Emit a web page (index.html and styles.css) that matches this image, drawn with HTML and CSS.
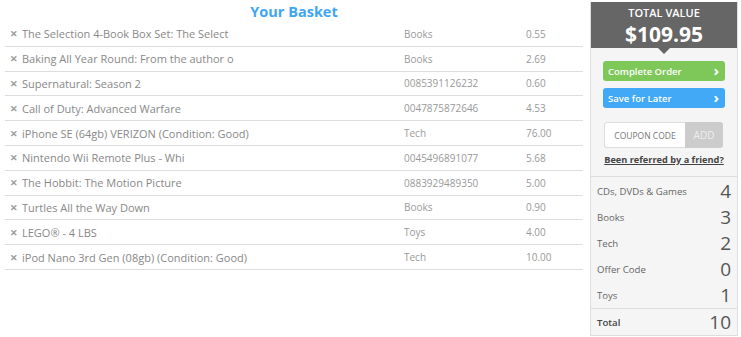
FILE: index.html
```html
<!DOCTYPE html>
<html lang="en">
<head>
  <meta charset="UTF-8">
  <title>Your Basket</title>
  <link rel="stylesheet" href="styles.css">
</head>
<body>
  <div class="page">
    <div class="basket">
      <h1>Your Basket</h1>
      <div class="items">
        <div class="item"><span class="rm">&#x2715;</span><span class="name">The Selection 4-Book Box Set: The Select</span><span class="cat">Books</span><span class="price">0.55</span></div>
        <div class="item"><span class="rm">&#x2715;</span><span class="name">Baking All Year Round: From the author o</span><span class="cat">Books</span><span class="price">2.69</span></div>
        <div class="item"><span class="rm">&#x2715;</span><span class="name">Supernatural: Season 2</span><span class="cat">0085391126232</span><span class="price">0.60</span></div>
        <div class="item"><span class="rm">&#x2715;</span><span class="name">Call of Duty: Advanced Warfare</span><span class="cat">0047875872646</span><span class="price">4.53</span></div>
        <div class="item"><span class="rm">&#x2715;</span><span class="name">iPhone SE (64gb) VERIZON (Condition: Good)</span><span class="cat">Tech</span><span class="price">76.00</span></div>
        <div class="item"><span class="rm">&#x2715;</span><span class="name">Nintendo Wii Remote Plus - Whi</span><span class="cat">0045496891077</span><span class="price">5.68</span></div>
        <div class="item"><span class="rm">&#x2715;</span><span class="name">The Hobbit: The Motion Picture</span><span class="cat">0883929489350</span><span class="price">5.00</span></div>
        <div class="item"><span class="rm">&#x2715;</span><span class="name">Turtles All the Way Down</span><span class="cat">Books</span><span class="price">0.90</span></div>
        <div class="item"><span class="rm">&#x2715;</span><span class="name">LEGO® - 4 LBS</span><span class="cat">Toys</span><span class="price">4.00</span></div>
        <div class="item"><span class="rm">&#x2715;</span><span class="name">iPod Nano 3rd Gen (08gb) (Condition: Good)</span><span class="cat">Tech</span><span class="price">10.00</span></div>
      </div>
    </div>

    <div class="summary">
      <div class="total-box">
        <div class="total-label">TOTAL VALUE</div>
        <div class="total-value">$109.95</div>
      </div>
      <div class="actions">
        <button class="btn btn-green">Complete Order <span class="chev">&#x203A;</span></button>
        <button class="btn btn-blue">Save for Later <span class="chev">&#x203A;</span></button>
        <div class="coupon">
          <input type="text" placeholder="COUPON CODE">
          <button class="add">ADD</button>
        </div>
        <a class="referral" href="#">Been referred by a friend?</a>
      </div>
      <div class="stats">
        <div class="stat"><span>CDs, DVDs &amp; Games</span><b>4</b></div>
        <div class="stat"><span>Books</span><b>3</b></div>
        <div class="stat"><span>Tech</span><b>2</b></div>
        <div class="stat"><span>Offer Code</span><b>0</b></div>
        <div class="stat"><span>Toys</span><b>1</b></div>
        <div class="stat stat-total"><span>Total</span><b>10</b></div>
      </div>
    </div>
  </div>
</body>
</html>
```

FILE: styles.css
```css
body { margin: 0; font-family: "Open Sans", "Liberation Sans", sans-serif; background: #fff; color: #888; }
.page { display: flex; align-items: flex-start; }

.basket { width: 578px; padding-left: 5px; }
h1 { margin: 0; padding-top: 2px; height: 20px; line-height: 20px; font-size: 14.5px; font-weight: 700; color: #40a6f2; text-align: center; }
.item { display: grid; grid-template-columns: 17px 382px 122px 1fr; align-items: center; height: 23.8px; border-bottom: 1px solid #ddd; }
.rm { font-size: 9px; color: #999; font-weight: 700; padding-left: 5px; }
.name { font-size: 11px; color: #888; }
.cat, .price { font-size: 10px; color: #999; }
.name, .cat, .price { white-space: nowrap; overflow: hidden; }

.summary { width: 146px; margin: 2px 0 0 7px; background: #f5f5f5; border: 1px solid #ddd; border-top: none; }
.total-box { position: relative; background: #666; color: #fff; text-align: center; height: 46px; }
.total-box::after { content: ""; position: absolute; left: 50%; bottom: -6px; margin-left: -6px; border-left: 6px solid transparent; border-right: 6px solid transparent; border-top: 6px solid #666; }
.total-label { font-size: 11px; font-weight: 600; padding-top: 3px; line-height: 16px; }
.total-value { font-size: 21px; font-weight: 700; line-height: 26px; }

.actions { padding: 13px 12px 0; display: flex; flex-direction: column; align-items: stretch; }
.btn { display: flex; justify-content: space-between; align-items: center; height: 20px; border: none; border-radius: 3px; color: #fff; font-family: inherit; font-size: 9.5px; font-weight: 600; padding: 0 6px 0 5px; }
.btn + .btn { margin-top: 7px; }
.btn-green { background: #7ec85a; }
.btn-blue { background: #41a9f5; }
.chev { font-size: 15px; font-weight: 700; line-height: 15px; margin-top: -2px; }

.coupon { display: flex; margin-top: 14px; height: 26px; padding: 0 2px 0 1px; }
.coupon input { width: 72px; border: 1px solid #ddd; border-right: none; border-radius: 3px 0 0 3px; background: #fff; padding: 0 4px; font-family: inherit; font-size: 8.5px; text-align: center; }
.coupon input::placeholder { color: #777; }
.add { flex: 1; border: none; border-radius: 0 3px 3px 0; background: #ccc; color: #eee; font-family: inherit; font-size: 10px; }

.referral { display: block; margin: 6px -6px 0; padding-bottom: 10px; text-align: center; white-space: nowrap; color: #444; font-size: 9.2px; font-weight: 700; line-height: 12px; }

.stats { border-top: 1px solid #ddd; padding-top: 1px; }
.stat { display: flex; justify-content: space-between; align-items: center; height: 26px; padding: 0 6px; font-size: 9.6px; color: #666; }
.stat b { font-size: 19px; font-weight: 400; color: #555; }
.stat-total { border-top: 1px solid #ddd; color: #444; font-weight: 600; }
```
